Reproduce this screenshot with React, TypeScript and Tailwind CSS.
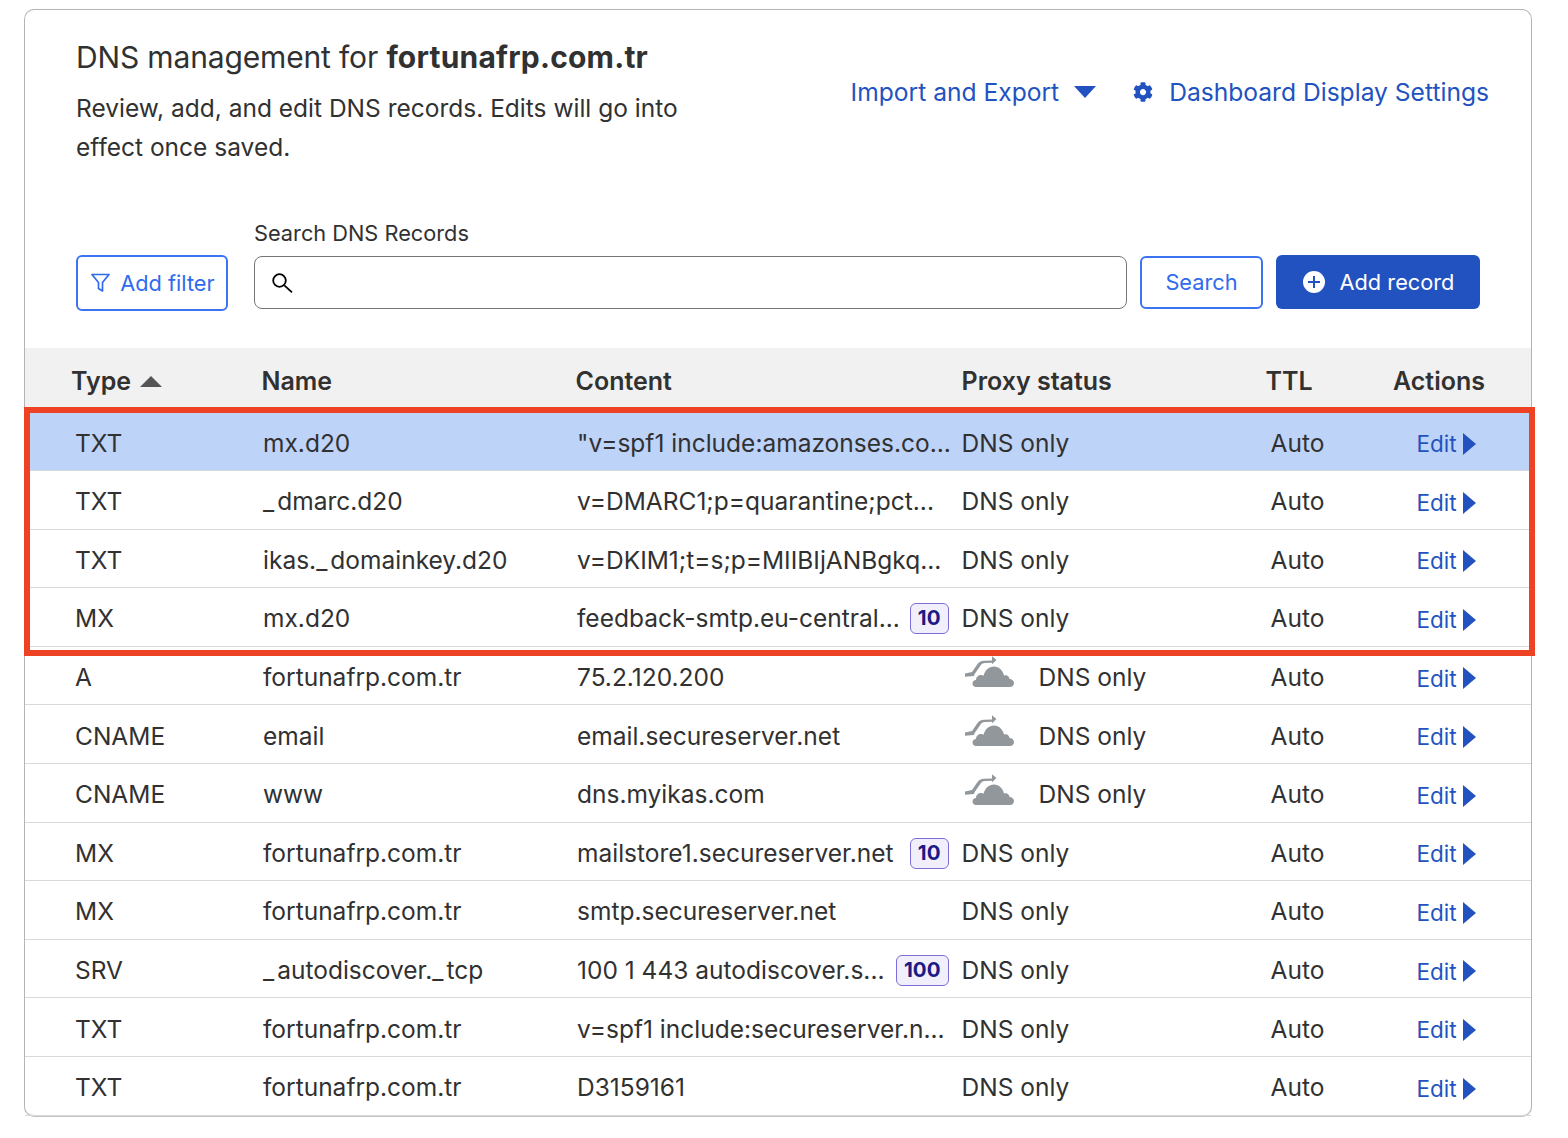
import React from 'react';
import { FaCog } from 'react-icons/fa';

interface DnsRecord {
  type: string;
  name: string;
  content: string;
  priority?: string;
  cloud?: boolean;
  selected?: boolean;
}

const records: DnsRecord[] = [
  { type: 'TXT', name: 'mx.d20', content: '"v=spf1 include:amazonses.co...', selected: true },
  { type: 'TXT', name: '_dmarc.d20', content: 'v=DMARC1;p=quarantine;pct...' },
  { type: 'TXT', name: 'ikas._domainkey.d20', content: 'v=DKIM1;t=s;p=MIIBIjANBgkq...' },
  { type: 'MX', name: 'mx.d20', content: 'feedback-smtp.eu-central...', priority: '10' },
  { type: 'A', name: 'fortunafrp.com.tr', content: '75.2.120.200', cloud: true },
  { type: 'CNAME', name: 'email', content: 'email.secureserver.net', cloud: true },
  { type: 'CNAME', name: 'www', content: 'dns.myikas.com', cloud: true },
  { type: 'MX', name: 'fortunafrp.com.tr', content: 'mailstore1.secureserver.net', priority: '10' },
  { type: 'MX', name: 'fortunafrp.com.tr', content: 'smtp.secureserver.net' },
  { type: 'SRV', name: '_autodiscover._tcp', content: '100 1 443 autodiscover.s...', priority: '100' },
  { type: 'TXT', name: 'fortunafrp.com.tr', content: 'v=spf1 include:secureserver.n...' },
  { type: 'TXT', name: 'fortunafrp.com.tr', content: 'D3159161' },
];

const CloudIcon = () => (
  <svg width="51" height="32" viewBox="0 0 51 32" className="text-[#92979b]" fill="currentColor">
    <path d="M12 31c-2 0-3.500-1.500-3.500-3.500s1.500-3.500 3.500-3.500c0-3 2.500-5 5-5 1 0 2 .3 2.500.8C21 14 25 10.500 30 10.500c5 0 9 4 10 9 1-.5 2-.5 3 0 1.500.7 2.500 2 2.500 3.500 2.500 0 4.500 1.800 4.500 4 0 2.300-1.500 4-4 4z" />
    <path d="M1 17.500l7-1.500 5-7.300c1.700-2.500 4-3.900 7-3.900l8-.3V.3L32.500 4 28 8.300V6.800l-7 .2c-2.200.1-3.600 1.200-4.800 3l-5.700 8.300-.5 1.700-9 .8z" />
  </svg>
);

const RecordRow = ({ record }: { record: DnsRecord }) => (
  <div
    className={`grid h-[58.6px] grid-cols-[188px_314px_384.5px_309px_146px_1fr] items-center border-b border-[#d9d9d9] pl-[50px] pt-[3.5px] ${
      record.selected ? 'bg-[#bed3f8]' : ''
    }`}
  >
    <div>{record.type}</div>
    <div>
      {/* underscores run wider in the reference */}
      {record.name.split('_').map((part, i) => (
        <React.Fragment key={i}>
          {i > 0 && <span className="mr-[3px]">_</span>}
          {part}
        </React.Fragment>
      ))}
    </div>
    <div className="flex items-center justify-between whitespace-nowrap pr-[13px]">
      <span>{record.content}</span>
      {record.priority && (
        <span className="flex h-[31px] items-center rounded-[6px] border border-[#7a6fd8] bg-[#f0effb] px-[7px] text-[20.5px] font-bold text-[#1d1a85]">
          {record.priority}
        </span>
      )}
    </div>
    <div className="flex items-center">
      {record.cloud && (
        <span className="ml-[2px] mr-[24px] -mt-[10px]">
          <CloudIcon />
        </span>
      )}
      <span>DNS only</span>
    </div>
    <div>Auto</div>
    <div className="flex items-center gap-[6px] pt-[2px] text-[22.5px] text-[#2252c0]">
      <span>Edit</span>
      <span className="h-0 w-0 border-y-[11px] border-l-[13px] border-y-transparent border-l-[#2252c0]" />
    </div>
  </div>
);

export default function App() {
  return (
    <div className="min-h-[1138px] bg-white pl-[24px] pt-[9px] font-['Inter',sans-serif] text-[24.5px] text-[#313131]">
      <div className="relative h-[1108px] w-[1508px] rounded-[10px] border-x border-b-2 border-t border-x-[#b4b4b4] border-b-[#c4c4c4] border-t-[#b4b4b4] bg-white">
        {/* Heading */}
        <div className="flex h-[338px] flex-col pl-[51px]">
          <div className="flex items-start justify-between pr-[42px] pt-[24px]">
            <div className="w-[640px]">
              <h1 className="text-[30px] leading-[46px] tracking-[-0.15px]">
                DNS management for <b className="font-bold tracking-[0.2px]">fortunafrp.com.tr</b>
              </h1>
              <p className="mt-[9px] leading-[39px]">
                Review, add, and edit DNS records. Edits will go into effect once saved.
              </p>
            </div>
            <div className="mt-[40px] flex items-center text-[24.6px] text-[#2252c0]">
              <span>Import and Export</span>
              <span className="ml-[15px] mr-[37px] h-0 w-0 border-x-[11px] border-t-[12px] border-x-transparent border-t-[#2252c0]" />
              <FaCog size={20} className="mr-[16px]" />
              <span>Dashboard Display Settings</span>
            </div>
          </div>

          {/* Search bar */}
          <div className="mt-[52px] flex items-end text-[21.75px]">
            <button className="-mb-[2px] flex h-[56px] w-[152px] items-center justify-center gap-[10px] rounded-[6px] border-2 border-[#3b73f0] pl-[2px] text-[#2f6bed]">
              <svg width="19" height="20" viewBox="0 0 19 20" fill="none" stroke="currentColor" strokeWidth="1.7" strokeLinejoin="round">
                <path d="M1 1.500h17l-6.500 8v8.500l-4-2.500v-6z" />
              </svg>
              <span>Add filter</span>
            </button>
            <div className="ml-[26px] w-[873px]">
              <label className="mb-[9px] block leading-[28px]">Search DNS Records</label>
              <div className="flex h-[53px] items-center rounded-[8px] border border-[#767676] pl-[17px]">
                <svg width="21" height="20" viewBox="0 0 21 20" fill="none" stroke="#000" strokeWidth="1.800">
                  <circle cx="7.500" cy="7.500" r="6.300" />
                  <path d="M12.300 12.300l7.700 7" />
                </svg>
              </div>
            </div>
            <button className="ml-[13px] h-[53px] w-[123px] rounded-[6px] border-2 border-[#3b73f0] text-[#2f6bed]">
              Search
            </button>
            <button className="ml-[13px] flex h-[54px] w-[204px] items-center justify-center gap-[15px] rounded-[6px] bg-[#2252c0] pl-[1px] text-white">
              <svg width="22" height="22" viewBox="0 0 22 22">
                <circle cx="11" cy="11" r="11" fill="#fff" />
                <path d="M11 5v12M5 11h12" stroke="#2252c0" strokeWidth="2" />
              </svg>
              <span>Add record</span>
            </button>
          </div>
        </div>

        {/* Table */}
        <div className="grid h-[64.5px] grid-cols-[190.5px_314px_386px_304px_127.5px_1fr] items-center bg-[#f1f1f1] pl-[46px] pt-[2px] text-[25px] font-semibold">
          <div className="flex items-center gap-[9px]">
            Type
            <span className="h-0 w-0 border-x-[11px] border-b-[11px] border-x-transparent border-b-[#555555]" />
          </div>
          <div>Name</div>
          <div>Content</div>
          <div>Proxy status</div>
          <div>TTL</div>
          <div>Actions</div>
        </div>
        {records.map((record, i) => (
          <RecordRow key={i} record={record} />
        ))}

        {/* Red highlight over the first four rows */}
        <div className="pointer-events-none absolute left-[-1px] top-[397px] h-[249px] w-[1511px] border-[6px] border-[#ee4224]" />
      </div>
    </div>
  );
}
